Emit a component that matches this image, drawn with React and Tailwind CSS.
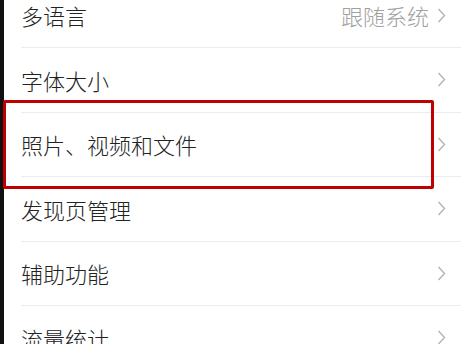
import React from "react";

const rows = [
  { label: "多语言", value: "跟随系统" },
  { label: "字体大小" },
  { label: "照片、视频和文件" },
  { label: "发现页管理" },
  { label: "辅助功能" },
  { label: "流量统计" },
];

function Chevron() {
  return (
    <svg width="9" height="15" viewBox="0 0 9 15" className="shrink-0">
      <path d="M1.5 1 L7.5 7.5 L1.5 14" fill="none" stroke="#b3b3b3" strokeWidth="1.4" />
    </svg>
  );
}

export default function App() {
  return (
    <div
      className="relative flex h-[344px] w-[461px] overflow-hidden bg-white"
      style={{ fontFamily: '"Noto Sans CJK SC", "Noto Sans", sans-serif' }}
    >
      <div className="w-[4px] shrink-0 bg-[#111]" />
      <div className="mt-[-16.5px] flex-1">
        {rows.map((row) => (
          <div key={row.label} className="pl-[17px]">
            <div className="flex h-[64.5px] items-center justify-between border-b border-[#ececec] pr-[15px]">
              <span className="text-[22px] font-light leading-none text-[#222]">{row.label}</span>
              <div className="flex items-center gap-[8px]">
                {row.value && (
                  <span className="text-[22px] font-light leading-none text-[#a0a0a0]">{row.value}</span>
                )}
                <Chevron />
              </div>
            </div>
          </div>
        ))}
      </div>
      <div className="pointer-events-none absolute left-[3px] top-[100px] h-[89px] w-[431px] rounded-[2px] border-[3.5px] border-[#be0000]" />
    </div>
  );
}
